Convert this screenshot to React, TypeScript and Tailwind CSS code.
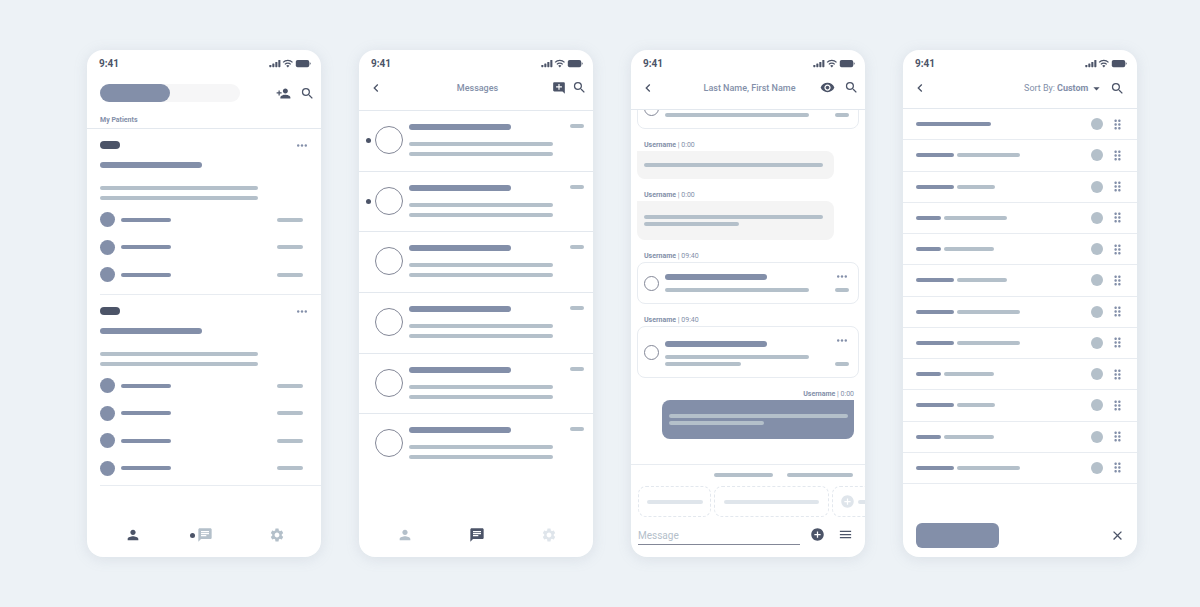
import React from "react";
import clsx from "clsx";
import {
  MdAddCircle,
  MdAddComment,
  MdArrowDropDown,
  MdChat,
  MdChevronLeft,
  MdClose,
  MdDragIndicator,
  MdMenu,
  MdPerson,
  MdPersonAdd,
  MdSearch,
  MdSettings,
  MdVisibility,
} from "react-icons/md";

type BarProps = { className?: string };

// Placeholder line, size and colour come from the caller
const Bar = ({ className }: BarProps) => (
  <span className={clsx("block shrink-0 rounded-full", className)} />
);

const StatusIcons = () => (
  <svg width="42" height="9" viewBox="0 0 42 9" fill="currentColor" aria-hidden="true">
    <rect x="0.3" y="5.9" width="2.1" height="2.3" rx="0.6" />
    <rect x="3.3" y="4.5" width="2.1" height="3.7" rx="0.6" />
    <rect x="6.3" y="2.9" width="2.1" height="5.3" rx="0.6" />
    <rect x="9.3" y="1" width="2.1" height="7.2" rx="0.6" />
    <path
      d="M14.1 3.4a6.6 6.6 0 0 1 9.4 0M15.9 5.4a4 4 0 0 1 5.8 0"
      fill="none"
      stroke="currentColor"
      strokeWidth="1.3"
    />
    <path d="M18.8 8.4 17.2 6.8a2.3 2.3 0 0 1 3.2 0z" />
    <rect x="26.8" y="0.9" width="13.4" height="7.3" rx="1.8" />
    <path d="M40.7 3.3c.7.2 1 .7 1 1.3s-.3 1.1-1 1.3z" />
  </svg>
);

const Phone = ({ children }: { children: React.ReactNode }) => (
  <section className="flex min-w-0 flex-col overflow-hidden rounded-2xl bg-white shadow-[0_2px_14px_rgba(131,143,169,0.18)]">
    <div className="flex h-[27px] shrink-0 items-center justify-between pl-3 pr-[10px] text-[#4c5468]">
      <span className="text-[10px] font-bold leading-3">9:41</span>
      <StatusIcons />
    </div>
    {children}
  </section>
);

type IconButtonProps = {
  label: string;
  className?: string;
  children: React.ReactNode;
};

const IconButton = ({ label, className, children }: IconButtonProps) => (
  <button
    type="button"
    aria-label={label}
    className={clsx("flex shrink-0 text-[15px]", className ?? "text-[#4c5468]")}
  >
    {children}
  </button>
);

const BackButton = () => (
  <IconButton label="Back">
    <MdChevronLeft className="text-base" />
  </IconButton>
);

const MoreButton = () => (
  <button type="button" aria-label="More" className="flex h-1 items-center text-[#838fa9]">
    <svg width="10" height="3" viewBox="0 0 10 3" fill="currentColor">
      <circle cx="1.2" cy="1.5" r="1.2" />
      <circle cx="5" cy="1.5" r="1.2" />
      <circle cx="8.8" cy="1.5" r="1.2" />
    </svg>
  </button>
);

const BottomNav = ({ active }: { active: "patients" | "messages" }) => {
  const onPatients = active === "patients";
  return (
    <nav className="mt-auto grid grid-cols-3 pb-[14px] pl-[10px] pr-2 text-base">
      <a href="#patients" aria-label="Patients" className="flex justify-center">
        <MdPerson className={onPatients ? "text-[#4c5468]" : "text-[#b4c0ca]"} />
      </a>
      <a href="#messages" aria-label="Messages" className="relative flex justify-center">
        {onPatients && (
          <span className="absolute left-[21px] top-[6px] size-[5px] rounded-full bg-[#4c5468]" />
        )}
        <MdChat className={onPatients ? "text-[#b4c0ca]" : "text-[#4c5468]"} />
      </a>
      <a href="#settings" aria-label="Settings" className="flex justify-center">
        <MdSettings className={onPatients ? "text-[#b4c0ca]" : "text-[#dfe5eb]"} />
      </a>
    </nav>
  );
};

type PatientCardProps = { rows: number; listClass: string };

const PatientCard = ({ rows, listClass }: PatientCardProps) => (
  <article className="ml-[13px] border-b border-[#e8ecf1] pt-3">
    <div className="flex items-center justify-between pr-[14px]">
      <span className="h-2 w-5 rounded-full bg-[#4c5468]" />
      <MoreButton />
    </div>
    <Bar className="mt-[13px] h-[6px] w-[102px] bg-[#838fa9]" />
    <Bar className="mt-[18px] h-1 w-[158px] bg-[#b4c0ca]" />
    <Bar className="mt-[6px] h-1 w-[158px] bg-[#b4c0ca]" />
    <ul className={clsx("mt-3 flex flex-col justify-between", listClass)}>
      {Array.from({ length: rows }, (_, row) => (
        <li key={row} className="flex items-center pr-[18px]">
          <span className="size-[15px] rounded-full bg-[#838fa9]" />
          <Bar className="ml-[6px] h-1 w-[50px] bg-[#838fa9]" />
          <Bar className="ml-auto h-1 w-[26px] bg-[#b4c0ca]" />
        </li>
      ))}
    </ul>
  </article>
);

const PatientsScreen = () => (
  <Phone>
    <header className="border-b border-[#e3e8ee] pb-[2px] pl-[13px] pr-[6px] pt-[7px]">
      <div className="flex items-center">
        <div className="flex h-[18px] w-[140px] rounded-full bg-[#f6f6f7]">
          <button type="button" aria-label="Mine" className="w-1/2 rounded-full bg-[#838fa9]" />
          <button type="button" aria-label="All" className="w-1/2 rounded-full" />
        </div>
        <div className="ml-auto flex gap-[9px]">
          <IconButton label="Add patient">
            <MdPersonAdd />
          </IconButton>
          <IconButton label="Search">
            <MdSearch />
          </IconButton>
        </div>
      </div>
      <h2 className="mt-3 text-[7px] font-bold leading-3 text-[#838fa9]">My Patients</h2>
    </header>
    <PatientCard rows={3} listClass="h-[70px] mb-3" />
    <PatientCard rows={4} listClass="h-[98px] mb-[9px]" />
    <BottomNav active="patients" />
  </Phone>
);

const MessageRow = ({ unread }: { unread: boolean }) => (
  <li className="flex items-start border-b border-[#e3e8ee] pl-[7px] pr-[9px] pt-[13px] last:border-b-0">
    <span
      className={clsx("mt-[14px] size-[5px] rounded-full", unread && "bg-[#4c5468]")}
    />
    <span className="ml-1 mt-[2px] size-7 rounded-full border border-[#838797]" />
    <div className="ml-[6px]">
      <Bar className="h-[6px] w-[102px] bg-[#838fa9]" />
      <Bar className="mt-3 h-1 w-[144px] bg-[#b4c0ca]" />
      <Bar className="mt-[6px] h-1 w-[144px] bg-[#b4c0ca]" />
    </div>
    <Bar className="ml-auto h-1 w-[14px] bg-[#b4c0ca]" />
  </li>
);

const MessagesScreen = () => (
  <Phone>
    <header className="grid h-[34px] grid-cols-[1fr_auto_1fr] items-start border-b border-[#e3e8ee] pl-[9px] pr-[6px] pt-[3px]">
      <BackButton />
      <h2 className="text-[9px] font-medium leading-4 text-[#838fa9]">Messages</h2>
      <div className="flex items-center justify-end gap-[6px]">
        <IconButton label="New message">
          <MdAddComment className="text-sm" />
        </IconButton>
        <IconButton label="Search">
          <MdSearch />
        </IconButton>
      </div>
    </header>
    <ul className="grid h-[364px] grid-rows-6">
      {[true, true, false, false, false, false].map((unread, idx) => (
        <MessageRow key={idx} unread={unread} />
      ))}
    </ul>
    <BottomNav active="messages" />
  </Phone>
);

const MessageLabel = ({ time, className }: { time: string; className?: string }) => (
  <p
    className={clsx(
      "mt-[11px] pl-[7px] pr-[5px] text-[7px] leading-[11px] text-[#838fa9]",
      className
    )}
  >
    <b>Username</b> | {time}
  </p>
);

const MessageCard = ({ long }: { long?: boolean }) => (
  <div className="flex items-center rounded-lg border border-[#e8ecf1] px-[6px] py-[11px]">
    <span className="size-[15px] shrink-0 rounded-full border border-[#838797]" />
    <div className="ml-[6px]">
      <Bar className={clsx("h-[6px] w-[102px] bg-[#838fa9]", long && "mt-[3px]")} />
      <Bar className="mt-2 h-1 w-[144px] bg-[#b4c0ca]" />
      {long && <Bar className="mt-[3px] h-1 w-[76px] bg-[#b4c0ca]" />}
    </div>
    <div className="ml-auto flex flex-col items-center justify-between self-stretch pr-[3px]">
      <MoreButton />
      <Bar className="h-1 w-[14px] bg-[#b4c0ca]" />
    </div>
  </div>
);

const ChatScreen = () => (
  <Phone>
    <header className="grid h-[33px] grid-cols-[1fr_auto_1fr] items-start border-b border-[#e3e8ee] pl-[9px] pr-[6px] pt-[3px]">
      <BackButton />
      <h2 className="text-[9px] font-medium leading-4 text-[#838fa9]">Last Name, First Name</h2>
      <div className="flex items-center justify-end gap-[9px]">
        <IconButton label="Show details">
          <MdVisibility />
        </IconButton>
        <IconButton label="Search">
          <MdSearch />
        </IconButton>
      </div>
    </header>

    {/* Thread, scrolled so the first card is cut by the header */}
    <div className="flex h-[355px] flex-col justify-end overflow-hidden border-b border-[#e8ecf1] px-[6px] pb-[25px]">
      <MessageCard />
      <MessageLabel time="0:00" />
      <div className="mr-[25px] rounded-lg rounded-tl-none bg-[#f4f4f4] px-[7px] py-3">
        <Bar className="h-1 w-[179px] bg-[#b4c0ca]" />
      </div>
      <MessageLabel time="0:00" />
      <div className="mr-[25px] rounded-lg rounded-tl-none bg-[#f4f4f4] px-[7px] py-[14px]">
        <Bar className="h-1 w-[179px] bg-[#b4c0ca]" />
        <Bar className="mt-[3px] h-1 w-[95px] bg-[#b4c0ca]" />
      </div>
      <MessageLabel time="09:40" />
      <MessageCard />
      <MessageLabel time="09:40" />
      <MessageCard long />
      <MessageLabel time="0:00" className="text-right" />
      <div className="ml-[25px] mr-[5px] rounded-lg rounded-tr-none bg-[#838fa9] px-[7px] py-[14px]">
        <Bar className="h-1 w-[179px] bg-[#b4c0ca]" />
        <Bar className="mt-[3px] h-1 w-[95px] bg-[#b4c0ca]" />
      </div>
    </div>

    <div className="mt-2 flex justify-end gap-[14px] pr-3">
      <Bar className="h-1 w-[59px] bg-[#b4c0ca]" />
      <Bar className="h-1 w-[66px] bg-[#b4c0ca]" />
    </div>
    <div className="mt-[9px] flex gap-[3px] overflow-hidden pl-[7px]">
      <div className="flex h-[31px] w-[73px] shrink-0 items-center rounded-lg border border-dashed border-[#e3e8ee] px-2">
        <Bar className="h-1 w-14 bg-[#dfe5eb]" />
      </div>
      <div className="flex h-[31px] w-[115px] shrink-0 items-center rounded-lg border border-dashed border-[#e3e8ee] px-[9px]">
        <Bar className="h-1 w-[95px] bg-[#dfe5eb]" />
      </div>
      <div className="flex h-[31px] w-[73px] shrink-0 items-center gap-[3px] rounded-lg border border-dashed border-[#e3e8ee] px-[7px]">
        <IconButton label="Add reply" className="text-[#dfe5eb]">
          <MdAddCircle />
        </IconButton>
        <Bar className="h-1 w-10 bg-[#dfe5eb]" />
      </div>
    </div>
    <div className="mb-3 mt-[10px] flex items-start pl-[7px] pr-3">
      <input
        type="text"
        aria-label="Message"
        placeholder="Message"
        className="h-[18px] min-w-0 flex-1 border-b border-[#838797] text-[10px] text-[#4c5468] outline-none placeholder:text-[#b4c0ca]"
      />
      <div className="ml-[10px] flex gap-[13px]">
        <IconButton label="Attach">
          <MdAddCircle />
        </IconButton>
        <IconButton label="Menu">
          <MdMenu />
        </IconButton>
      </div>
    </div>
  </Phone>
);

const sortRows = [
  ["w-[75px]"],
  ["w-[38px]", "w-[63px]"],
  ["w-[38px]", "w-[38px]"],
  ["w-[25px]", "w-[63px]"],
  ["w-[25px]", "w-[50px]"],
  ["w-[38px]", "w-[50px]"],
  ["w-[38px]", "w-[63px]"],
  ["w-[38px]", "w-[63px]"],
  ["w-[25px]", "w-[50px]"],
  ["w-[38px]", "w-[38px]"],
  ["w-[25px]", "w-[50px]"],
  ["w-[38px]", "w-[63px]"],
];

const SortScreen = () => (
  <Phone>
    <header className="flex h-[32px] items-start border-b border-[#e3e8ee] pl-[9px] pr-3 pt-[3px]">
      <BackButton />
      <div className="ml-auto flex h-4 items-center text-[9px] leading-4 text-[#838fa9]">
        <label htmlFor="sort">Sort By:</label>
        <div className="relative ml-[2px] flex items-center">
          <select id="sort" className="appearance-none pr-[15px] font-bold outline-none">
            <option>Custom</option>
          </select>
          <MdArrowDropDown className="pointer-events-none absolute right-0 text-[15px] text-[#4c5468]" />
        </div>
      </div>
      <div className="ml-[6px] flex h-4 items-center">
        <IconButton label="Search">
          <MdSearch />
        </IconButton>
      </div>
    </header>
    <ul className="grid h-[375px] grid-rows-12">
      {sortRows.map(([name, detail], idx) => (
        <li key={idx} className="flex items-center border-b border-[#e8ecf1] pl-[13px] pr-3">
          <Bar className={clsx("h-1 bg-[#838fa9]", name)} />
          {detail && <Bar className={clsx("ml-[3px] h-1 bg-[#b4c0ca]", detail)} />}
          <span className="ml-auto size-3 rounded-full bg-[#b4c0ca]" />
          <IconButton label="Reorder" className="ml-[7px] text-[#838fa9]">
            <MdDragIndicator />
          </IconButton>
        </li>
      ))}
    </ul>
    <div className="mb-[9px] mt-auto flex items-center justify-between pl-[13px] pr-3">
      <button type="button" aria-label="Save order" className="h-[25px] w-[83px] rounded-md bg-[#838fa9]" />
      <IconButton label="Close">
        <MdClose />
      </IconButton>
    </div>
  </Phone>
);

const App = () => (
  <main className="min-h-screen bg-[#edf2f6] pb-12 pl-[87px] pr-[63px] pt-[50px] font-['Roboto',sans-serif]">
    <div className="grid grid-cols-4 gap-[38px]">
      <PatientsScreen />
      <MessagesScreen />
      <ChatScreen />
      <SortScreen />
    </div>
  </main>
);

export default App;
